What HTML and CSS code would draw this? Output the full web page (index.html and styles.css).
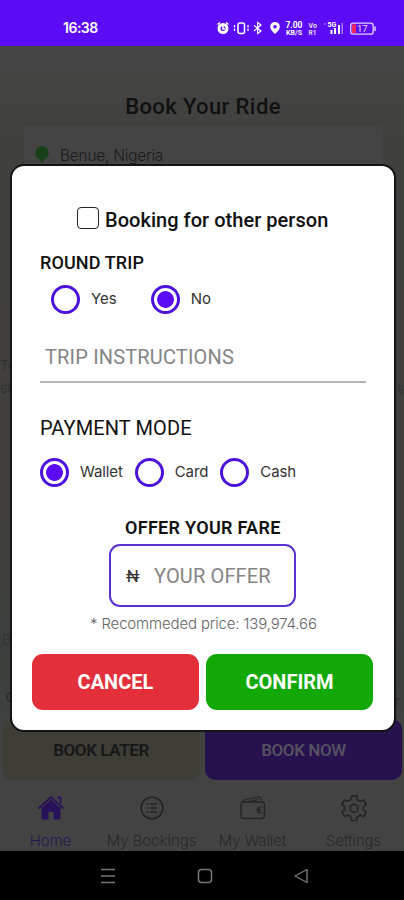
FILE: index.html
```html
<!DOCTYPE html>
<html lang="en">
<head>
<meta charset="utf-8">
<title>Book Your Ride</title>
<link rel="stylesheet" href="styles.css">
</head>
<body>
<div class="phone">
  <header class="status">
    <span class="clock">16:38</span>
    <svg class="status-icons" viewBox="0 0 164 18" width="164" height="18">
      <g fill="none" stroke="#fff" stroke-width="1.5">
        <circle cx="8" cy="9.5" r="4" fill="#5b0cf5" stroke-width="3"/>
        <path d="M2.5 5.500l2.500-2M11 3.500l2.500 2M8 7v3h2" stroke-width="1.600"/>
        <rect x="23" y="4" width="6.500" height="10.500" rx="2"/>
        <path d="M19.500 6v6M33 6v6" stroke-width="1.300" stroke-dasharray="2.500 1"/>
        <path d="M45 6.500l7 5.500-3.300 2.500V3.500L52 6l-7 6" transform="translate(-6 0)" stroke-width="1.200"/>
      </g>
      <path d="M60 15c-3-3-4.800-5-4.800-7.300a4.800 4.800 0 0 1 9.600 0C64.800 10 63 12 60 15z" fill="#fff"/>
      <circle cx="60" cy="7.700" r="1.800" fill="#5b0cf5"/>
      <g fill="#fff" font-family="Roboto, sans-serif" font-weight="700">
        <text x="70.500" y="9" font-size="8.500" textLength="17">7.00</text>
        <text x="71" y="16" font-size="7" textLength="16">KB/S</text>
        <text x="93.500" y="9" font-size="7" opacity=".85">Vo</text>
        <text x="93.500" y="15.500" font-size="6.500" opacity=".85">R1</text>
        <text x="112.500" y="7.500" font-size="7">5G</text>
        <path d="M115.500 11h2v4h-2zM119 9h2v6h-2zM123 6h2v9h-2z"/>
        <path d="M126.500 4h1.500v11h-1.500zM109 4h1.500v2H109z" opacity=".45"/>
      </g>
      <rect x="135.700" y="4.200" width="22.500" height="11" rx="2.500" fill="none" stroke="#e0cfff" stroke-width="1.300"/>
      <rect x="137" y="5.500" width="4" height="8.500" fill="#f02860"/>
      <path d="M160 7.500v4.500" stroke="#e0cfff" stroke-width="1.500"/>
      <text x="142" y="13.300" font-size="9.500" fill="#e8dcff" font-family="Roboto, sans-serif">17</text>
    </svg>
  </header>

  <main class="page">
    <h1>Book Your Ride</h1>
    <section class="route">
      <svg width="14" height="20" viewBox="0 0 14 20"><circle cx="7" cy="7" r="6.700" fill="#173f18"/><path d="M4 12h6l-3 5z" fill="#173f18"/></svg>
      <span>Benue, Nigeria</span>
    </section>
    <section class="map">
      <div class="map-row place"><span>Te</span></div>
      <div class="map-row street"><span>sk</span><span>s</span></div>
      <div class="map-row label"><span>B</span></div>
      <div class="map-row locate"><svg width="12" height="16" viewBox="0 0 12 16"><circle cx="8" cy="6" r="5" fill="none" stroke="#2b2e2b" stroke-width="1.500"/></svg><span>r</span></div>
    </section>
    <div class="book-actions">
      <button class="later">BOOK LATER</button>
      <button class="now">BOOK NOW</button>
    </div>
    <nav class="tabs">
      <a class="tab active">
        <svg width="28" height="28" viewBox="0 0 28 28"><path d="M14 5.500 4.500 14v11.500h7V18h5v7.500h7V14z" fill="#28135a"/><path d="M1.500 14.500 14 3l12.500 11.500M20 3.500h3.500v6" fill="none" stroke="#28135a" stroke-width="1.800"/></svg>
        <span>Home</span>
      </a>
      <a class="tab">
        <svg width="28" height="28" viewBox="0 0 28 28" fill="none" stroke="#242424" stroke-width="1.500"><circle cx="14" cy="14" r="10.800"/><path d="M12 10h7M12 14h7M12 18h7M8.500 10h2M8.500 14h2M8.500 18h2"/></svg>
        <span>My Bookings</span>
      </a>
      <a class="tab">
        <svg width="28" height="28" viewBox="0 0 28 28" fill="none" stroke="#262626" stroke-width="1.500"><rect x="2" y="8" width="23.500" height="16.500" rx="3"/><path d="M2.500 9.500C3 6.500 5 6 7 5.500l13-2.300q2.500-.2 2.800 4.300M9 7.500l11-2M25.500 13H21a3 3 0 0 0 0 6h4.500" stroke-width="1.200"/><circle cx="20.500" cy="16" r="1" fill="#262626"/></svg>
        <span>My Wallet</span>
      </a>
      <a class="tab">
        <svg width="28" height="28" viewBox="0 0 28 28" fill="none" stroke="#242424" stroke-width="1.600" stroke-linejoin="round"><path d="M11.500 2h5l.8 3.700 2.700 1.500 3.600-1.200 2.500 4.300-2.800 2.500v2.900l2.800 2.500-2.500 4.300-3.600-1.200-2.700 1.600-.8 3.600h-5l-.8-3.600L8 21.300l-3.600 1.200-2.500-4.300 2.800-2.500v-2.900l-2.800-2.500L4.400 6 8 7.200l2.700-1.500z"/><circle cx="14" cy="14.200" r="4"/></svg>
        <span>Settings</span>
      </a>
    </nav>
  </main>

  <footer class="system">
    <svg width="16" height="16" viewBox="0 0 16 16" stroke="#777" stroke-width="1.500"><path d="M1 1.500h14M1 8h14M1 14.500h14"/></svg>
    <svg width="16" height="16" viewBox="0 0 16 16" fill="none" stroke="#777" stroke-width="1.500"><rect x="1.500" y="1.500" width="13" height="13" rx="3"/></svg>
    <svg width="16" height="16" viewBox="0 0 16 16" fill="none" stroke="#777" stroke-width="1.400" stroke-linejoin="round"><path d="M14 1.500v13L2 8z"/></svg>
  </footer>

  <div class="modal" role="dialog">
    <label class="other"><i class="box"></i><span>Booking for other person</span></label>
    <h2 class="round-title"><span>ROUND TRIP</span></h2>
    <div class="radios round">
      <label><i class="radio"></i><span>Yes</span></label>
      <label><i class="radio on"></i><span>No</span></label>
    </div>
    <div class="instructions"><span>TRIP INSTRUCTIONS</span></div>
    <h2 class="pay-title"><span>PAYMENT MODE</span></h2>
    <div class="radios pay">
      <label><i class="radio on"></i><span>Wallet</span></label>
      <label><i class="radio"></i><span>Card</span></label>
      <label><i class="radio"></i><span>Cash</span></label>
    </div>
    <h2 class="fare-title"><span>OFFER YOUR FARE</span></h2>
    <div class="fare"><b>₦</b><span>YOUR OFFER</span></div>
    <p class="hint"><span>* Recommeded price: 139,974.66</span></p>
    <div class="actions">
      <button class="cancel">CANCEL</button>
      <button class="confirm">CONFIRM</button>
    </div>
  </div>
</div>
</body>
</html>
```
FILE: styles.css
```css
* { box-sizing: border-box; }
body { margin: 0; font-family: Roboto, "Liberation Sans", sans-serif; }
h1, h2, p { margin: 0; }
button { border: 0; padding: 0; font-family: inherit; }
span { white-space: nowrap; }

.phone {
  position: relative;
  display: flex;
  flex-direction: column;
  width: 404px;
  height: 900px;
  overflow: hidden;
  background: #434343;
}

.status {
  display: flex;
  align-items: center;
  justify-content: space-between;
  flex: none;
  height: 46px;
  padding: 10px 25px 0 63px;
  background: #5b0cf5;
  color: #fff;
}
.clock { font: 600 14px/18px Inter, sans-serif; letter-spacing: -.5px; }
.status-icons { flex: none; }

.page { display: flex; flex-direction: column; flex: 1; min-height: 0; background: linear-gradient(#454545, #40403d 12%, #42403e 55%, #3b403d 78%, #434343 90%); }
h1 { margin-top: 46px; height: 30px; font-size: 22px; line-height: 30px; font-weight: 500; text-align: center; color: #111; letter-spacing: .4px; padding-left: 2px; }
.route { display: flex; gap: 11px; margin: 4px 21px 0 24px; height: 52px; padding: 20px 11px 0; background: #444; color: #1b1b1b; font: 300 15.500px/19px Inter, sans-serif; letter-spacing: -.25px; }
.map { display: flex; flex-direction: column; flex: 1; color: #303030; font: 300 14px/20px Inter, sans-serif; }
.map-row { display: flex; justify-content: space-between; height: 20px; }
.place { margin-top: 178px; }
.street { margin-top: 2px; }
.label { margin-top: 232px; padding-left: 2px; }
.locate { margin-top: 41px; padding: 0 4px; }

.book-actions { display: grid; grid-template-columns: 198px 197px; gap: 5px; padding: 0 2px; height: 61px; flex: none; }
.book-actions button { border-radius: 10px; font-size: 17px; font-weight: 600; letter-spacing: -.4px; }
.later { background: #3e3d36; color: #171717; }
.now { background: #28114f; color: #555060; }

.tabs { display: grid; grid-template-columns: repeat(4, 1fr); flex: none; height: 71px; padding-top: 14px; }
.tab { display: flex; flex-direction: column; align-items: center; color: #292929; font: 300 15px/20px Inter, sans-serif; }
.tab span { margin-top: 9px; letter-spacing: -.1px; }
.tab.active { color: #28174f; }

.system { display: flex; align-items: center; justify-content: space-between; flex: none; height: 49px; padding: 0 95px 0 100px; background: #000; }

.modal {
  position: absolute;
  left: 10px;
  top: 164px;
  width: 386px;
  height: 568px;
  display: flex;
  flex-direction: column;
  padding: 0 20px 0 28px;
  border: 2px solid #141414;
  border-radius: 14px;
  background: #fefefe;
}
.modal h2 { flex: none; color: #111; }
.other { display: flex; align-items: center; gap: 6px; height: 40px; margin: 34px 0 0 37px; font-size: 20px; font-weight: 500; color: #111; letter-spacing: .04px; }
.box { width: 22px; height: 22px; margin-top: -4px; border: 1.500px solid #222; border-radius: 4px; }
.modal .round-title { margin-top: 10px; font-size: 18px; line-height: 25px; height: 24px; font-weight: 500; letter-spacing: .1px; }

.radios { display: flex; height: 30px; color: #333; font: 400 15px/30px Inter, sans-serif; }
.radios label { display: flex; align-items: center; gap: 11px; }
.radio { flex: none; width: 29px; height: 29px; border: 3px solid #4b12dc; border-radius: 50%; }
.radio.on { background: radial-gradient(circle, #5b0cf5 8px, #fefefe 8.700px); }
.round { margin: 10px 0 0 11px; gap: 34px; }
.pay { margin-top: 15px; gap: 12px; letter-spacing: -.1px; }

.instructions { margin-top: 18px; width: 326px; height: 51px; padding-left: 5px; border-bottom: 2px solid #b4b4b4; color: #858585; font-size: 20px; line-height: 50px; letter-spacing: .17px; }
.modal .pay-title { margin-top: 31px; font-size: 20px; line-height: 28px; font-weight: 400; letter-spacing: .1px; }
.modal .fare-title { margin-top: 28px; padding-left: 85px; font-size: 18px; line-height: 25px; height: 24px; font-weight: 600; letter-spacing: .3px; }
.fare { display: flex; align-items: center; flex: none; gap: 15px; width: 187px; height: 63px; margin: 5px 0 0 69px; padding-left: 15px; border: 2px solid #5b32d0; border-radius: 11px; color: #858585; font-size: 20px; letter-spacing: .15px; }
.fare b { width: 13px; color: #333; font: 400 17px Roboto, sans-serif; }
.hint { margin: 7px 0 0 50px; color: #666; font: 300 15px/20px Inter, sans-serif; letter-spacing: -.15px; }
.actions { display: grid; grid-template-columns: 167px 167px; gap: 7px; margin: 20px 0 0 -8px; height: 56px; }
.actions button { border-radius: 11px; color: #fff; font-size: 20px; font-weight: 700; }
.cancel { background: #e22f39; }
.confirm { background: #12a805; }
```
